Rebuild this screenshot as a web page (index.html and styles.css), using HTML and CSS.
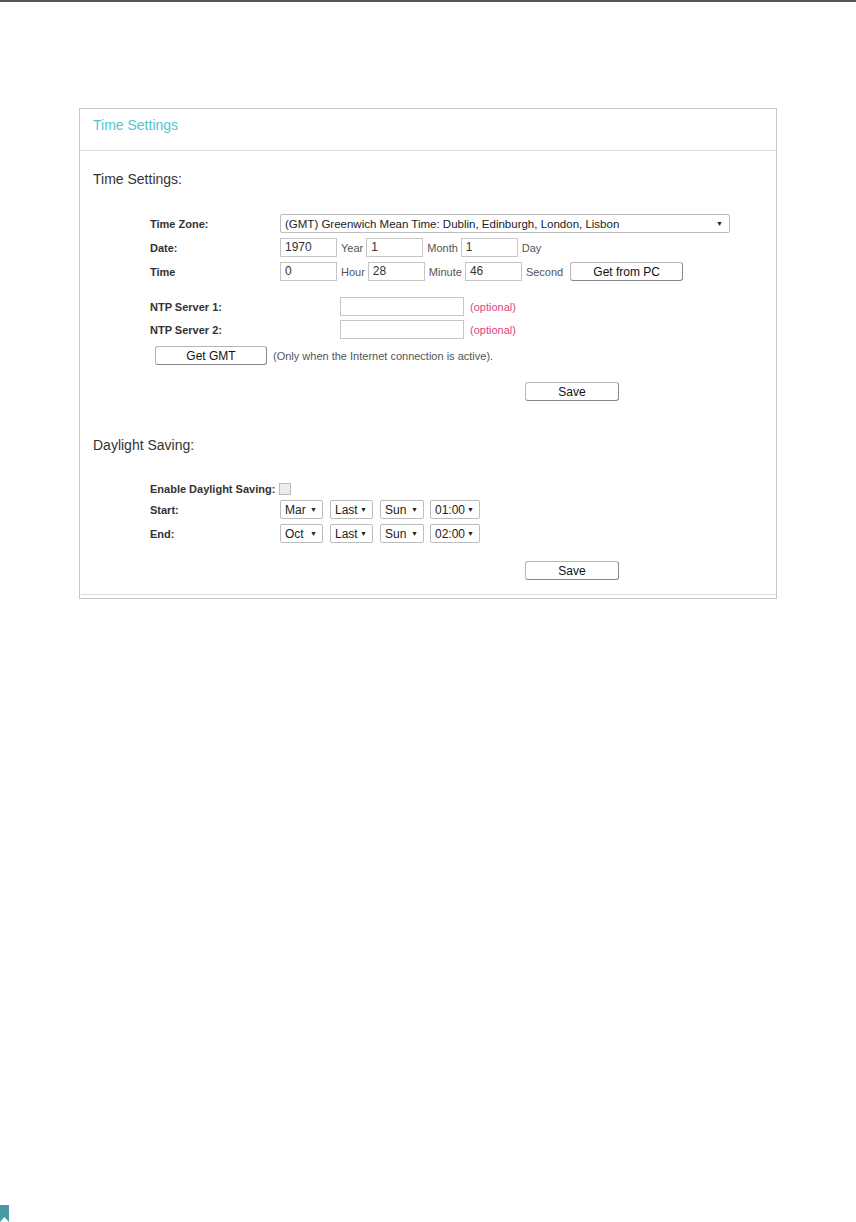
FILE: index.html
```html
<!DOCTYPE html>
<html>
<head>
<meta charset="utf-8">
<link rel="stylesheet" href="styles.css">
</head>
<body>
<div class="topline"></div>
<div class="page">
  <div class="panel">
    <div class="panel-head">Time Settings</div>

    <div class="section-title first">Time Settings:</div>
    <div class="form">
      <div class="row">
        <div class="label">Time Zone:</div>
        <div class="select tz"><span class="val">(GMT) Greenwich Mean Time: Dublin, Edinburgh, London, Lisbon</span><span class="arrow">▼</span></div>
      </div>
      <div class="row gap5">
        <div class="label">Date:</div>
        <div class="input">1970</div><span class="unit">Year</span>
        <div class="input">1</div><span class="unit">Month</span>
        <div class="input">1</div><span class="unit">Day</span>
      </div>
      <div class="row gap5">
        <div class="label">Time</div>
        <div class="input">0</div><span class="unit">Hour</span>
        <div class="input">28</div><span class="unit">Minute</span>
        <div class="input">46</div><span class="unit">Second</span>
        <button class="btn pc">Get from PC</button>
      </div>
      <div class="row ntp1">
        <div class="label wide">NTP Server 1:</div>
        <div class="input ntp"></div><span class="optional">(optional)</span>
      </div>
      <div class="row gap4">
        <div class="label wide">NTP Server 2:</div>
        <div class="input ntp"></div><span class="optional">(optional)</span>
      </div>
      <div class="row gmt">
        <button class="btn gmtbtn">Get GMT</button>
        <span class="note">(Only when the Internet connection is active).</span>
      </div>
      <div class="save-row first-save"><button class="btn save">Save</button></div>
    </div>

    <div class="section-title second">Daylight Saving:</div>
    <div class="form">
      <div class="row enable">
        <div class="label auto">Enable Daylight Saving:</div>
        <span class="checkbox"></span>
      </div>
      <div class="row gap2">
        <div class="label">Start:</div>
        <div class="select s-mon"><span class="val">Mar</span><span class="arrow">▼</span></div>
        <div class="select s-week"><span class="val">Last</span><span class="arrow">▼</span></div>
        <div class="select s-day"><span class="val">Sun</span><span class="arrow">▼</span></div>
        <div class="select s-time"><span class="val">01:00</span><span class="arrow">▼</span></div>
      </div>
      <div class="row gap5">
        <div class="label">End:</div>
        <div class="select s-mon"><span class="val">Oct</span><span class="arrow">▼</span></div>
        <div class="select s-week"><span class="val">Last</span><span class="arrow">▼</span></div>
        <div class="select s-day"><span class="val">Sun</span><span class="arrow">▼</span></div>
        <div class="select s-time"><span class="val">02:00</span><span class="arrow">▼</span></div>
      </div>
      <div class="save-row second-save"><button class="btn save">Save</button></div>
    </div>
    <div class="panel-foot"></div>
  </div>
</div>
<div class="bookmark">
  <svg width="9" height="17" viewBox="0 0 9 17"><polygon points="0,0 9,0 9,17 4.5,12 0,17" fill="#4a97a6"/></svg>
</div>
</body>
</html>
```
FILE: styles.css
```css
html, body {
  margin: 0;
  padding: 0;
  background: #fff;
}
body {
  width: 856px;
  height: 1222px;
  position: relative;
  overflow: hidden;
  font-family: "Liberation Sans", Arial, sans-serif;
  color: #333;
}
.topline {
  height: 2px;
  background: #555;
}
.page {
  padding-top: 106px;
  padding-left: 79px;
}
.panel {
  width: 696px;
  border: 1px solid #c8c8c8;
  padding-bottom: 3px;
}
.panel-head {
  box-sizing: border-box;
  height: 42px;
  padding-left: 13px;
  padding-top: 0;
  line-height: 32px;
  font-size: 14px;
  color: #52c6cf;
  border-bottom: 1px solid #dcdcdc;
}
.section-title {
  padding-left: 13px;
  font-size: 14px;
  line-height: 16px;
  color: #333;
}
.section-title.first { margin-top: 20px; }
.section-title.second { margin-top: 36px; }
.form {
  padding-left: 70px;
}
.row {
  display: flex;
  align-items: center;
  height: 19px;
}
.form .row:first-child { margin-top: 27px; }
.form .row.enable { margin-top: 26px; }
.gap5 { margin-top: 5px; }
.gap4 { margin-top: 4px; }
.gap2 { margin-top: 2px; }
.ntp1 { margin-top: 16px; }
.gmt { margin-top: 7px; padding-left: 5px; }
.label {
  width: 130px;
  flex: none;
  font-size: 11px;
  font-weight: bold;
  color: #333;
}
.label.wide { width: 190px; }
.label.auto { width: auto; margin-right: 4px; }
.input {
  box-sizing: border-box;
  width: 57px;
  height: 19px;
  border: 1px solid #c6c6c6;
  padding-left: 4px;
  font-size: 12px;
  line-height: 17px;
  color: #333;
  flex: none;
}
.input.ntp { width: 124px; }
.unit {
  font-size: 11px;
  color: #555;
  margin-left: 4px;
  margin-right: 3px;
}
.optional {
  font-size: 11px;
  color: #e0467c;
  margin-left: 6px;
}
.note {
  font-size: 11px;
  color: #555;
  margin-left: 6px;
}
.select {
  box-sizing: border-box;
  height: 19px;
  border: 1px solid #bdbdbd;
  border-radius: 2px;
  display: flex;
  align-items: center;
  justify-content: space-between;
  padding: 0 5px 0 4px;
  font-size: 12px;
  color: #222;
  flex: none;
  background: #fff;
}
.select .arrow {
  font-size: 7px;
  color: #222;
}
.select.tz { width: 450px; font-size: 11.5px; }
.select.tz .arrow { margin-right: 1px; font-size: 7px; }
.s-mon { width: 43px; margin-right: 7px; }
.s-week { width: 43px; margin-right: 7px; }
.s-day { width: 44px; margin-right: 6px; }
.s-time { width: 50px; }
.btn {
  box-sizing: border-box;
  height: 19px;
  background: #fff;
  border: 1px solid #b5b5b5;
  border-right-color: #888;
  border-bottom-color: #888;
  border-radius: 3px;
  font-family: "Liberation Sans", Arial, sans-serif;
  font-size: 12px;
  color: #111;
  padding: 0;
  flex: none;
}
.btn.pc { width: 113px; margin-left: 4px; }
.btn.gmtbtn { width: 112px; }
.btn.save { width: 94px; }
.save-row {
  padding-left: 375px;
  height: 19px;
  display: flex;
}
.first-save { margin-top: 17px; }
.second-save { margin-top: 18px; }
.checkbox {
  width: 10px;
  height: 10px;
  border: 1px solid #bbb;
  background: #ececec;
  display: inline-block;
}
.panel-foot {
  margin-top: 14px;
  margin-left: 1px;
  border-bottom: 1px solid #dcdcdc;
}
.bookmark {
  position: absolute;
  left: 0;
  top: 1205px;
  line-height: 0;
}
```
